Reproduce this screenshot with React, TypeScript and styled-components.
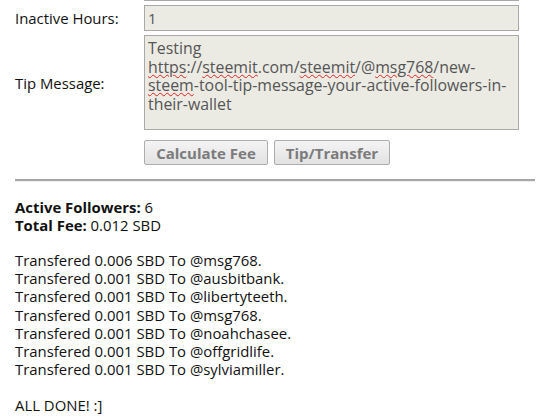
import styled, { createGlobalStyle } from "styled-components";

const GlobalStyle = createGlobalStyle`
  body {
    margin: 0;
    background: #fff;
    font-family: "Open Sans", "Noto Sans", sans-serif;
    font-size: 14.9px;
    color: #111;
  }
`;

const Page = styled.div`
  padding: 0 13px 0 15px;
`;

const Form = styled.div`
  display: grid;
  grid-template-columns: 129px 375px;
  row-gap: 4px;
  align-items: center;
`;

const Label = styled.label`
  line-height: 18px;
  color: #111;
`;

const ClippedField = styled.div`
  grid-column: 2;
  height: 1px;
  background: #a9a9a9;
`;

const Input = styled.div`
  box-sizing: border-box;
  height: 26px;
  padding: 3px 3px;
  border: 1px solid #a9a9a9;
  background: #ebebe4;
  color: #555;
  line-height: 18px;
`;

const TextBox = styled.div`
  box-sizing: border-box;
  height: 95px;
  padding: 3px 3px;
  border: 1px solid #a9a9a9;
  background: #ebebe4;
  color: #555;
  font-size: 15.9px;
  line-height: 18.6px;
  white-space: pre;
`;

const TextLine = styled.div`
  height: 18.6px;
`;

const Typo = styled.span`
  display: inline-block;
  text-decoration: underline wavy #e02020;
  text-decoration-thickness: 1px;
  text-underline-offset: 1px;
`;

const Actions = styled.div`
  grid-column: 2;
  display: flex;
  gap: 6px;
  margin-top: 6px;
`;

const Button = styled.button<{ $width: number }>`
  box-sizing: border-box;
  width: ${p => p.$width}px;
  height: 25px;
  padding: 0;
  border: 1px solid #adadad;
  border-radius: 2px;
  background: linear-gradient(#f4f4f4, #e2e2e2);
  color: #7b7b7b;
  font-family: inherit;
  font-size: 15px;
  font-weight: 700;
`;

const Rule = styled.hr`
  margin: 14px 0 0;
  border: 0;
  border-top: 2px solid #a7a7a7;
  border-bottom: 1px solid #efefef;
`;

const Results = styled.div`
  margin-top: 16px;
  line-height: 18.2px;
`;

const Line = styled.div<{ $gap?: number }>`
  min-height: 18.2px;
  margin-top: ${p => p.$gap ?? 0}px;
`;

const transfers = [
  ["0.006", "msg768"],
  ["0.001", "ausbitbank"],
  ["0.001", "libertyteeth"],
  ["0.001", "msg768"],
  ["0.001", "noahchasee"],
  ["0.001", "offgridlife"],
  ["0.001", "sylviamiller"],
];

export default function App() {
  return (
    <Page>
      <GlobalStyle />
      <Form>
        <ClippedField />
        <Label>Inactive Hours:</Label>
        <Input>1</Input>
        <Label>Tip Message:</Label>
        <TextBox>
          <TextLine>Testing</TextLine>
          <TextLine>
            <Typo>https</Typo>://<Typo>steemit</Typo>.com/<Typo>steemit</Typo>/@<Typo>msg768</Typo>/new-
          </TextLine>
          <TextLine>
            <Typo>steem</Typo>-tool-tip-message-your-active-followers-in-
          </TextLine>
          <TextLine>their-wallet</TextLine>
        </TextBox>
        <Actions>
          <Button $width={124}>Calculate Fee</Button>
          <Button $width={116}>Tip/Transfer</Button>
        </Actions>
      </Form>
      <Rule />
      <Results>
        <Line><b>Active Followers:</b> 6</Line>
        <Line><b>Total Fee:</b> 0.012 SBD</Line>
        {transfers.map(([amount, user], i) => (
          <Line key={i} $gap={i === 0 ? 16.5 : 0}>
            Transfered {amount} SBD To @{user}.
          </Line>
        ))}
        <Line $gap={18}>ALL DONE! :]</Line>
      </Results>
    </Page>
  );
}
